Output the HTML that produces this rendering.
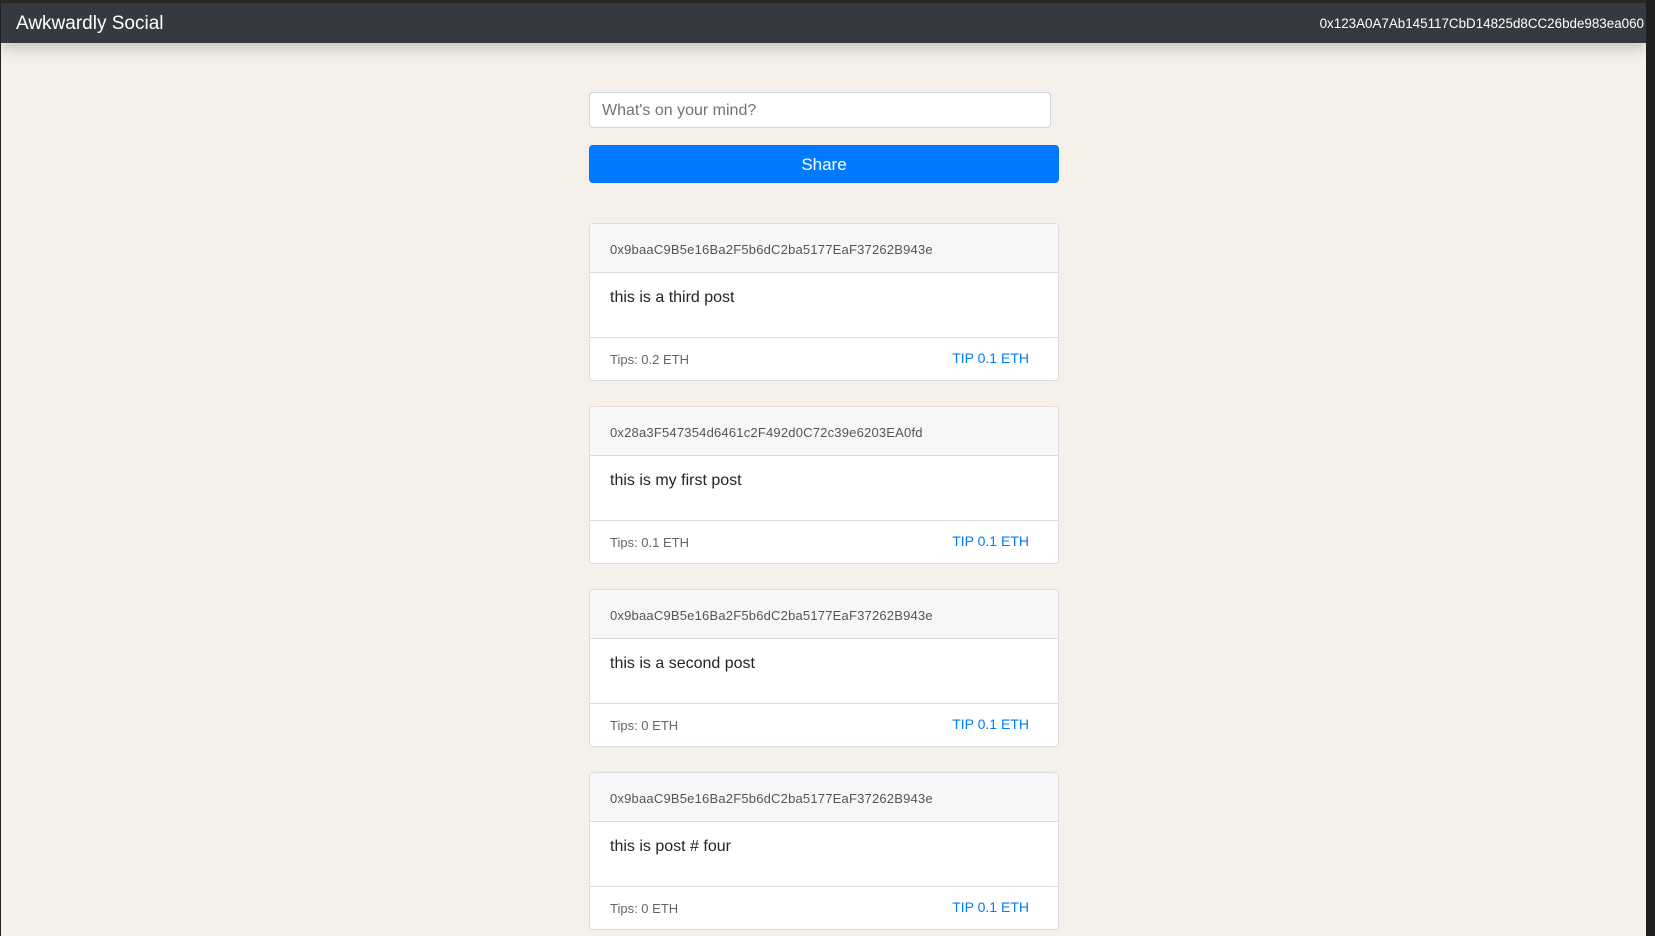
<!DOCTYPE html>
<html><head><style>
*{box-sizing:border-box;margin:0;padding:0}
body{width:1655px;height:936px;overflow:hidden;background:#f5f0ea;font-family:"Liberation Sans",sans-serif;position:relative}
.top{position:absolute;left:0;top:0;width:1655px;height:3px;background:#2a2826}
.nav{position:absolute;left:1px;top:3px;width:1645px;height:40px;background:#343a40;box-shadow:0 6px 14px rgba(0,0,0,.18);color:#fff}
.nav .t{position:absolute;left:15px;top:10px;font-size:19px}
.nav .a{position:absolute;right:2px;top:13px;font-size:13.4px}
.side{position:absolute;left:1646px;top:0;width:9px;height:936px;background:#1e1e1e}
.lside{position:absolute;left:0;top:0;width:1px;height:936px;background:#222}
.in{position:absolute;left:589px;top:92px;width:462px;height:36px;background:#fff;border:1px solid #ced4da;border-radius:4px;color:#6c757d;font-size:16px;padding:9px 12px}
.btn{position:absolute;left:589px;top:145px;width:470px;height:38px;background:#007bff;border-radius:4px;color:#fff;font-size:17px;text-align:center;line-height:40px}
.card{position:absolute;left:589px;width:470px;height:158px;background:#fff;border:1px solid #dcdcdc;border-radius:4px;overflow:hidden}
.h{height:49px;background:#f7f7f7;border-bottom:1px solid #dcdcdc;font-size:13px;letter-spacing:.2px;color:#555;padding:18px 20px 0}
.b{height:65px;border-bottom:1px solid #dcdcdc;font-size:16px;color:#212529;padding:16px 20px 0}
.f{height:42px;position:relative;font-size:13px;color:#666}
.f .l{position:absolute;left:20px;top:14px}
.f .r{position:absolute;right:29px;top:12px;color:#007bff;font-size:14px}
</style></head><body>
<div class="top"></div><div class="lside"></div>
<div class="nav"><span class="t">Awkwardly Social</span><span class="a">0x123A0A7Ab145117CbD14825d8CC26bde983ea060</span></div>
<div class="side"></div>
<div class="in">What's on your mind?</div>
<div class="btn">Share</div>
<div class="card" style="top:223px"><div class="h">0x9baaC9B5e16Ba2F5b6dC2ba5177EaF37262B943e</div><div class="b">this is a third post</div><div class="f"><span class="l">Tips: 0.2 ETH</span><span class="r">TIP 0.1 ETH</span></div></div>
<div class="card" style="top:406px"><div class="h">0x28a3F547354d6461c2F492d0C72c39e6203EA0fd</div><div class="b">this is my first post</div><div class="f"><span class="l">Tips: 0.1 ETH</span><span class="r">TIP 0.1 ETH</span></div></div>
<div class="card" style="top:589px"><div class="h">0x9baaC9B5e16Ba2F5b6dC2ba5177EaF37262B943e</div><div class="b">this is a second post</div><div class="f"><span class="l">Tips: 0 ETH</span><span class="r">TIP 0.1 ETH</span></div></div>
<div class="card" style="top:772px"><div class="h">0x9baaC9B5e16Ba2F5b6dC2ba5177EaF37262B943e</div><div class="b">this is post # four</div><div class="f"><span class="l">Tips: 0 ETH</span><span class="r">TIP 0.1 ETH</span></div></div>
</body></html>
